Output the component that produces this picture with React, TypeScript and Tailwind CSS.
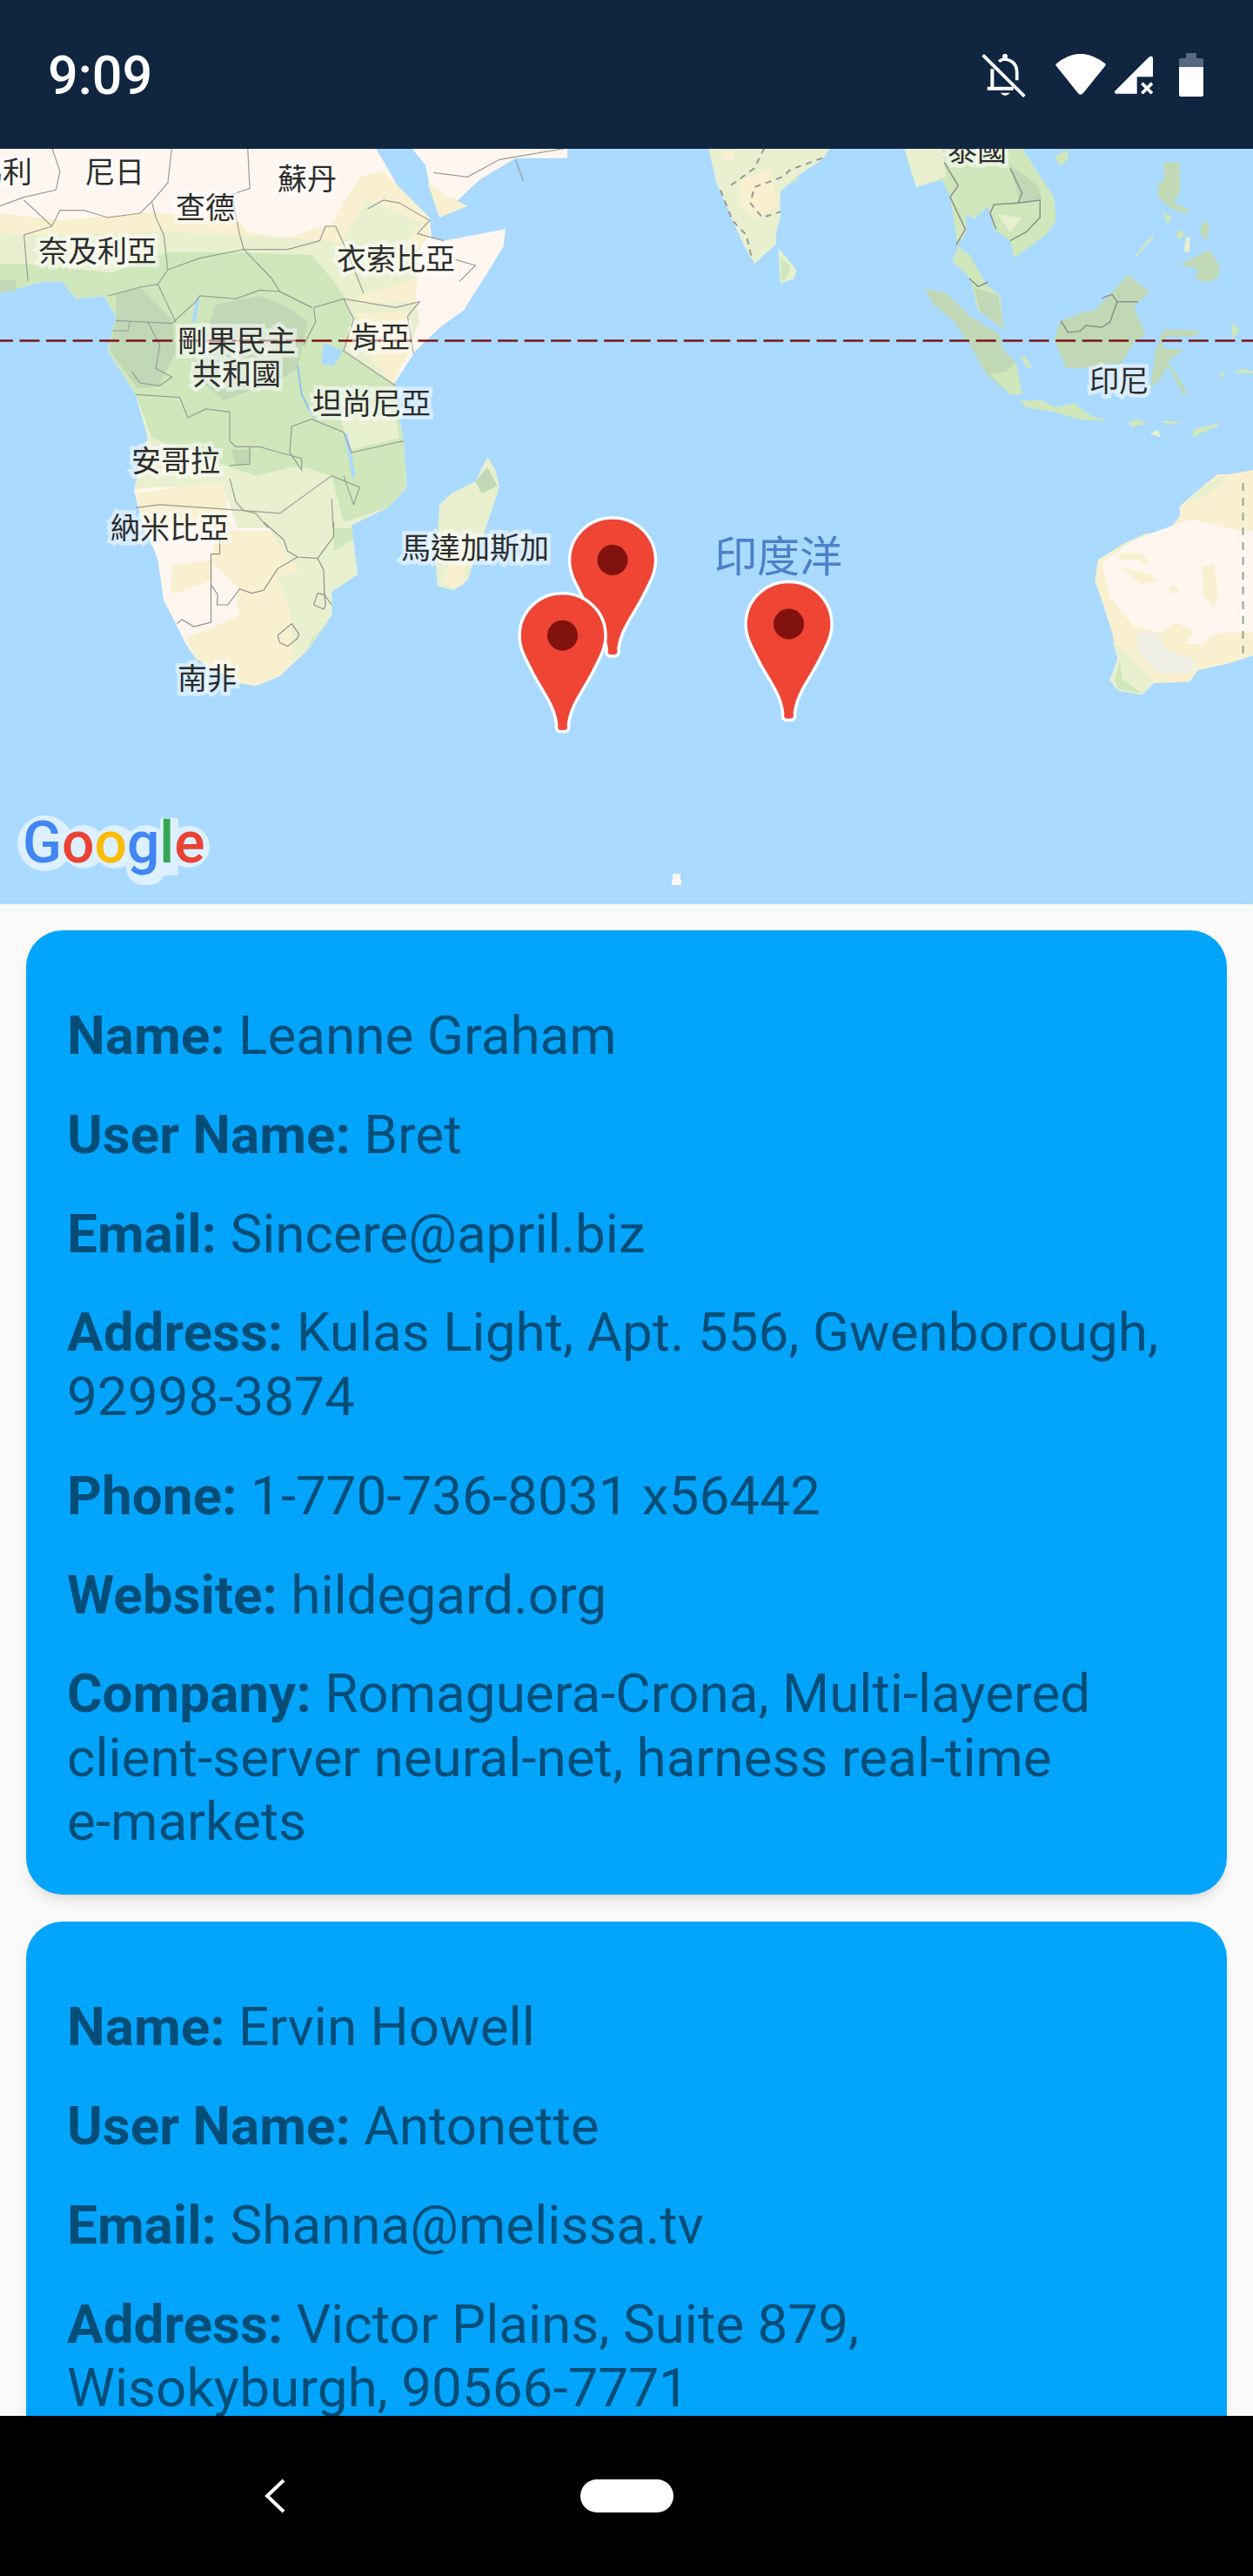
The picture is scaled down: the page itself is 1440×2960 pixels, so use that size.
import type { ReactNode } from "react";

const land = {
  desert: "#fff6ef",
  tan: "#f8f0cf",
  light: "#e8f0d0",
  green: "#cfe7bb",
  dark: "#c0d8b5",
};

const borders2 = [
  "130,0 150,80 140,145 60,170 0,200",
  "430,0 420,120 380,185 390,240 410,300 420,420 395,470 440,600",
  "620,0 625,140 580,160 600,300 610,350 500,380 420,420",
  "380,185 350,225 270,240 210,215 150,215 130,270 60,180",
  "130,270 60,300 70,460",
  "610,350 680,450 700,495 780,550",
  "610,350 680,350 720,350 800,320 815,270 840,270 860,330 910,500",
  "920,210 960,180 1000,190 1075,250 1045,295 1110,320",
  "1140,385 1190,405 1150,460",
  "860,520 990,550 1050,530 1020,580 1035,710",
  "860,520 785,550 790,600 760,680",
  "860,520 885,590 860,700 990,820",
  "290,595 430,605 490,530 500,510 590,520 650,490 700,495 780,550",
  "395,470 350,480 270,510",
  "280,630 320,630 325,600",
  "370,600 400,680 390,760 430,790 400,820 350,810 330,770",
  "340,850 450,860 470,930 515,900 575,910 575,1010 590,1030 650,1030 700,1050 755,1070 755,1110 725,1050 730,960 780,935 860,980 880,1050 1010,1010",
  "575,1140 590,1220 610,1250 700,1260 770,1190 830,1130 900,1170 885,1230 860,1130",
  "340,1240 400,1230 610,1250 640,1260 690,1340",
  "830,1210 835,1340",
  "625,1030 625,1090 575,1095",
];

const borders4 = [
  "660,0 710,60 720,100 745,120 795,125 835,50 835,0",
  "745,120 695,160 660,235 630,245 600,230 570,285 543,285 545,250 528,215 528,345 485,360 455,335 443,350",
  "528,215 528,110 550,110 550,60",
  "795,125 810,165 812,250 830,285",
  "785,285 795,245 812,250 815,285 810,300 785,285",
  "695,390 730,350 748,385 745,400 720,428 700,415 695,390",
];

function Pin({ x, y }: { x: number; y: number }) {
  return (
    <g transform={`translate(${x} ${y})`}>
      <path
        d="M0 0C-28 0-49.5 22-49.5 49C-49.5 64-42 76-35 90C-24 112-10 127-7 150L-7 155Q-7 159 0 159Q7 159 7 155L7 150C10 127 24 112 35 90C42 76 49.5 64 49.5 49C49.5 22 28 0 0 0Z"
        fill="#ee4535"
        stroke="#fff"
        strokeWidth="3.5"
      />
      <circle cx="0" cy="48.5" r="17.5" fill="#81120e" />
    </g>
  );
}

function MapDrawing() {
  return (
    <svg viewBox="0 171 1440 868" className="absolute inset-0 w-full h-full">
      <rect x="0" y="171" width="1440" height="868" fill="#aadaff" />

      {/* africa, coords taken from the upper left crop */}
      <g transform="translate(0 170) scale(0.4592 0.3333)">
        <polygon fill={land.desert} points="0,0 940,0 970,70 1010,170 1075,240 1080,310 1110,320 1265,280 1260,340 1220,430 1160,560 1100,620 1040,700 985,815 995,900 1010,1010 1018,1170 970,1240 880,1300 880,1335 365,1335 335,1180 370,1000 340,850 270,700 290,580 260,510 190,520 155,460 110,460 0,500" />
        <polygon fill={land.tan} points="0,225 150,250 380,220 440,230 590,240 620,290 720,310 830,260 900,100 960,80 1075,240 1075,300 1050,350 1040,520 1050,600 985,815 860,720 800,600 600,400 0,400" />
        <polygon fill={land.light} points="0,290 60,300 420,290 590,300 820,320 850,330 920,180 1060,260 1040,450 900,510 850,650 990,820 1000,1000 1018,1170 970,1240 880,1300 880,1335 600,1335 560,1170 380,1170 335,1180 370,1000 340,850 270,700 290,580 260,510 190,520 155,460 110,460 0,500" />
        <polygon fill={land.tan} points="1045,270 1075,300 1040,350 1010,340" />
        <polygon fill={land.tan} points="340,1190 560,1150 580,1330 365,1335" />
        <polygon fill={land.green} points="0,400 60,400 280,430 420,360 600,360 780,370 830,450 860,510 880,590 860,700 985,815 995,900 1010,1010 1018,1170 970,1240 860,1290 830,1130 760,1100 730,1100 640,1130 575,1100 380,1000 340,850 270,700 290,580 260,510 190,520 155,460 110,460 0,500" />
        <polygon fill={land.dark} points="290,500 350,480 430,590 440,700 400,820 345,830 275,700 290,580" />
        <polygon fill={land.dark} points="540,540 650,510 720,550 770,600 745,760 700,800 560,870 480,780" />
        <polygon fill={land.dark} points="0,455 40,455 40,490 0,500" />
        <polygon fill={land.light} points="880,540 1040,530 1050,600 985,790 920,760 880,680" />
        <polygon fill={land.tan} points="890,570 1020,560 1030,690 985,800 930,730" />
        <polygon fill={land.light} points="850,930 990,920 1000,1000 880,1040" />
        <polygon fill={land.dark} points="580,1040 625,1040 625,1095 590,1095" />
        <polygon fill="#aadaff" points="810,672 858,700 835,752 805,745" />
        <polyline fill="none" stroke="#aadaff" strokeWidth="4" points="495,520 485,600" vectorEffect="non-scaling-stroke" />
        <polyline fill="none" stroke="#8cc4ec" strokeWidth="2" points="745,750 755,850 785,930" vectorEffect="non-scaling-stroke" />
        <polyline fill="none" stroke="#aadaff" strokeWidth="4" points="865,985 875,1050 885,1135" vectorEffect="non-scaling-stroke" />
        {/* madagascar */}
        <polygon fill={land.light} points="1220,1065 1240,1110 1250,1170 1210,1335 1095,1335 1100,1230 1130,1190 1190,1150" />
        <polygon fill={land.dark} points="1220,1100 1245,1165 1205,1190 1190,1150" />
        {borders2.map((p) => (
          <polyline key={p} points={p} fill="none" stroke="#9b9c98" strokeWidth="1.2" vectorEffect="non-scaling-stroke" />
        ))}
        {/* arabia */}
        <polygon fill={land.desert} points="1030,0 1420,0 1420,35 1290,35 1200,110 1100,240 1075,130 1065,60" />
        <polygon fill={land.tan} points="1070,120 1100,240 1170,200 1110,160" />
        <polyline points="1085,85 1170,100 1250,40 1420,0" fill="none" stroke="#9b9c98" strokeWidth="1.2" vectorEffect="non-scaling-stroke" />
        <polyline points="1290,40 1310,115" fill="none" stroke="#9b9c98" strokeWidth="1.2" vectorEffect="non-scaling-stroke" />
      </g>

      {/* south africa, coords from the lower left crop */}
      <g transform="translate(0 600) scale(0.4592 0.3333)">
        <polygon fill={land.desert} points="365,20 395,130 410,270 440,350 465,420 490,470 600,555 640,565 700,530 770,440 830,320 830,240 895,180 880,20" />
        <polygon fill={land.tan} points="430,150 530,130 540,30 700,30 790,230 830,320 770,440 700,530 640,565 600,555 490,470 465,400 520,370 600,320 590,260 530,200 430,250" />
        <polygon fill={land.desert} points="530,140 600,230 580,320 540,340" />
        <polygon fill={land.light} points="670,20 880,20 895,180 830,240 830,320 770,440 730,480 730,330 710,240 690,190 750,170" />
        <polygon fill={land.green} points="835,20 880,20 885,60 835,100" />
        <polygon fill={land.green} points="825,345 780,400 770,440 790,395" />
        <polygon fill={land.light} points="1100,0 1220,0 1170,200 1135,235 1095,220 1090,130" />
        <polygon fill={land.tan} points="1125,140 1165,130 1160,215 1135,230 1110,210" />
        {borders4.map((p) => (
          <polyline key={p} points={p} fill="none" stroke="#8f918d" strokeWidth="1.2" vectorEffect="non-scaling-stroke" />
        ))}
      </g>

      {/* india and south east asia, upper right crop */}
      <g transform="translate(720 170) scale(0.4592 0.3333)">
        <polygon fill={land.light} points="205,0 510,0 490,40 435,90 385,150 385,240 375,290 375,330 320,400 295,340 265,250 225,120" />
        <polygon fill={land.tan} points="285,110 360,70 380,200 320,245 285,200" />
        <polygon fill={land.tan} points="235,10 270,10 270,40 245,40" />
        <polygon fill={land.green} points="400,130 435,95 425,115" />
        <polyline points="345,0 320,70 280,110 260,130" fill="none" stroke="#999" strokeWidth="2" strokeDasharray="7 6" vectorEffect="non-scaling-stroke" />
        <polyline points="490,35 410,75 390,100 320,135 310,190 340,240 385,220" fill="none" stroke="#999" strokeWidth="2" strokeDasharray="7 6" vectorEffect="non-scaling-stroke" />
        <polyline points="235,145 265,250 300,300 315,390" fill="none" stroke="#999" strokeWidth="2" strokeDasharray="7 6" vectorEffect="non-scaling-stroke" />
        <polygon fill={land.light} points="380,345 425,420 420,450 385,468" />
        <polygon fill={land.green} points="385,375 410,410 400,450 388,460" />

        <polygon fill={land.green} points="695,0 990,0 1070,170 1075,250 1050,300 1010,340 970,380 960,320 920,280 905,200 870,245 850,230 850,290 830,340 860,370 900,470 935,510 945,625 880,560 860,450 815,390 830,340 810,170 790,110 725,135" />
        <polygon fill={land.light} points="695,0 790,0 800,100 725,135" />
        <polygon fill={land.dark} points="960,60 1030,130 1040,180 985,190" />
        <polygon fill={land.light} points="930,230 990,240 960,290" />
        <polygon fill={land.dark} points="870,480 930,510 945,625 885,565" />
        <polyline points="795,50 830,130 810,170 848,280 825,335" fill="none" stroke="#8f8f8f" strokeWidth="1.5" vectorEffect="non-scaling-stroke" />
        <polyline points="960,70 990,155 980,190 1035,180 1035,240 1000,290 960,320" fill="none" stroke="#8f8f8f" strokeWidth="1.5" vectorEffect="non-scaling-stroke" />
        <polyline points="980,190 920,195 910,225 925,280" fill="none" stroke="#8f8f8f" strokeWidth="1.5" vectorEffect="non-scaling-stroke" />
        <polyline points="858,450 880,478 905,462" fill="none" stroke="#8f8f8f" strokeWidth="1.5" vectorEffect="non-scaling-stroke" />
        <polygon fill={land.green} points="1070,30 1105,5 1105,40 1085,60" />

        <polygon fill={land.dark} points="745,485 800,500 860,580 930,640 945,700 975,740 990,850 960,850 900,780 860,680 820,600 770,540" />
        <polygon fill={land.green} points="910,780 950,770 975,740 990,850 960,850" />
        <polygon fill={land.green} points="985,715 1000,720 1015,760 1000,755" />
        <polygon fill={land.green} points="985,870 1040,870 1075,895 1120,880 1165,925 1210,942 1130,935 1070,910 1000,895" />

        <polygon fill={land.dark} points="1255,437 1310,495 1285,525 1270,550 1300,640 1270,670 1240,740 1140,760 1100,760 1070,660 1085,595 1120,580 1130,570 1170,560 1210,505" />
        <polyline points="1190,518 1215,505 1228,530 1280,530" fill="none" stroke="#8f8f8f" strokeWidth="1.5" vectorEffect="non-scaling-stroke" />
        <polyline points="1228,530 1210,600 1190,618 1150,612 1135,632 1105,636 1087,596" fill="none" stroke="#8f8f8f" strokeWidth="1.5" vectorEffect="non-scaling-stroke" />

        <polygon fill={land.dark} points="1345,625 1440,630 1420,650 1350,650 1340,690 1395,695 1355,735 1405,845 1390,845 1355,750 1340,790 1310,830 1325,700" />
        <polygon fill={land.dark} points="1345,50 1385,50 1385,150 1370,190 1415,215 1395,225 1360,205 1330,170 1330,125 1345,110" />
        <polygon fill={land.dark} points="1460,350 1485,410 1480,450 1450,465 1425,450 1430,415 1385,405 1410,385" />
        <polygon fill={land.dark} points="1445,250 1460,265 1450,325 1435,285" />
        <polygon fill={land.green} points="1340,220 1365,240 1355,262" />
        <polygon fill={land.green} points="1380,282 1400,298 1378,318" />
        <polygon fill={land.light} points="1400,308 1410,308 1410,358 1395,358" />
        <polygon fill={land.green} points="1317,300 1320,310 1275,375 1272,370" />
        <polygon fill={land.green} points="1515,600 1535,630 1515,660" />
        <polygon fill={land.green} points="1490,770 1498,785 1482,790" />
        <polygon fill={land.green} points="1520,775 1540,760 1568,770 1568,778" />
        <polygon fill={land.green} points="1255,945 1280,935 1303,950 1265,962" />
        <polygon fill={land.green} points="1335,942 1392,942 1360,955" />
        <polygon fill={land.light} points="1310,985 1330,972 1338,998" />
        <polygon fill={land.green} points="1420,970 1483,948 1480,960 1442,980 1415,1000" />
      </g>

      {/* australia, from the right crop */}
      <g transform="translate(720 540) scale(0.4592 0.3333)">
        <polygon fill={land.tan} points="1568,0 1510,15 1480,15 1430,70 1385,125 1385,160 1355,210 1300,220 1250,250 1180,310 1172,380 1190,450 1215,560 1230,650 1210,725 1230,760 1290,775 1320,735 1410,730 1430,690 1500,670 1568,640" />
        <polygon fill={land.desert} points="1415,170 1540,210 1568,210 1568,560 1500,560 1470,570 1440,600 1400,600 1340,560 1270,540 1210,440 1190,320 1260,250 1310,220 1370,190" />
        <polygon fill={land.tan} points="1225,290 1290,285 1310,330 1280,310 1240,310" />
        <polygon fill={land.tan} points="1230,335 1310,360 1330,380 1290,395 1260,360" />
        <polygon fill={land.tan} points="1440,335 1470,325 1480,430 1470,480 1445,430" />
        <polygon fill={land.tan} points="1358,405 1372,395 1382,420 1370,428" />
        <polygon fill={land.tan} points="1375,525 1420,555 1400,600 1340,560" />
        <polygon fill="#f0f0e6" points="1280,560 1330,560 1350,620 1420,650 1420,700 1330,700 1280,620" />
        <polygon fill={land.light} points="1215,590 1260,640 1320,730 1290,775 1230,760 1210,725 1230,650" />
        <polygon fill={land.green} points="1235,650 1240,720 1290,770 1230,755 1222,725" />
        <polygon fill={land.light} points="1430,70 1490,20 1510,15 1450,90 1400,120" />
        <line x1="1543" y1="45" x2="1543" y2="650" stroke="#8da695" strokeWidth="2" strokeDasharray="9 8" vectorEffect="non-scaling-stroke" />
      </g>

      <line x1="-8" y1="391.5" x2="1440" y2="391.5" stroke="#7c1418" strokeWidth="2.5" strokeDasharray="23 7.53" />

      {/* pale halo behind the google letters */}
      <g fill="#ddf0ff">
        <circle cx="52" cy="969" r="32" />
        <circle cx="96" cy="973" r="25" />
        <circle cx="132" cy="973" r="25" />
        <circle cx="168" cy="973" r="25" />
        <rect x="145" y="975" width="46" height="42" rx="20" />
        <rect x="184" y="940" width="21" height="66" rx="3" />
        <circle cx="217" cy="973" r="24" />
      </g>

      <path d="M773 1004H782V1011H783V1017H772V1011H773Z" fill="#f7f7f5" />

      <Pin x={704} y={595} />
      <Pin x={646.5} y={681.7} />
      <Pin x={906.5} y={668.5} />
    </svg>
  );
}

function Label({ className, children }: { className: string; children: string }) {
  return (
    <span
      className={`absolute text-[34px] leading-[38px] whitespace-nowrap text-[#2c2c2c] [font-family:'Noto_Sans_CJK_TC','Noto_Sans',sans-serif] [-webkit-text-stroke:9px_rgba(255,255,255,0.55)] [paint-order:stroke_fill] ${className}`}
    >
      {children}
    </span>
  );
}

function MapPanel() {
  return (
    <div className="relative h-[868px] overflow-hidden shrink-0">
      <MapDrawing />
      <Label className="left-[-31px] top-[6px]">馬利</Label>
      <Label className="left-[98px] top-[6px]">尼日</Label>
      <Label className="left-[319px] top-[14px]">蘇丹</Label>
      <Label className="left-[202px] top-[47px]">查德</Label>
      <Label className="left-[44px] top-[97px]">奈及利亞</Label>
      <Label className="left-[387px] top-[106px]">衣索比亞</Label>
      <Label className="left-[204px] top-[200px]">剛果民主</Label>
      <Label className="left-[221px] top-[238px]">共和國</Label>
      <Label className="left-[403px] top-[196px]">肯亞</Label>
      <Label className="left-[359px] top-[272px]">坦尚尼亞</Label>
      <Label className="left-[151px] top-[338px]">安哥拉</Label>
      <Label className="left-[127px] top-[415px]">納米比亞</Label>
      <Label className="left-[461px] top-[438px]">馬達加斯加</Label>
      <Label className="left-[204px] top-[588px]">南非</Label>
      <Label className="left-[1089px] top-[-19px]">泰國</Label>
      <Label className="left-[1252px] top-[246px]">印尼</Label>
      <span className="absolute left-[821px] top-[438px] text-[49px] leading-[54px] whitespace-nowrap text-[#4c80c8] [font-family:'Noto_Sans_CJK_TC','Noto_Sans',sans-serif]">
        印度洋
      </span>
      <span className="absolute left-[26px] top-[759px] text-[66px] leading-[78px] font-medium whitespace-nowrap [font-family:Roboto,sans-serif]">
        <span className="text-[#4285f4]">G</span>
        <span className="text-[#ea4335]">o</span>
        <span className="text-[#fbbc05]">o</span>
        <span className="text-[#4285f4]">g</span>
        <span className="text-[#34a853]">l</span>
        <span className="text-[#ea4335]">e</span>
      </span>
    </div>
  );
}

function Field({ label, children }: { label: string; children: ReactNode }) {
  return (
    <p className="mb-[40.2px]">
      <span className="font-bold">{label}:</span> {children}
    </p>
  );
}

function StatusIcons() {
  return (
    <div className="flex items-center">
      <svg width="51" height="52" viewBox="85 60 153 156" fill="none" stroke="#fff">
        <path d="M90 70L233 212" strokeWidth="11" />
        <path d="M145 92Q155 84 165 84Q208 90 207 132V157" strokeWidth="11" />
        <path d="M122 118V180M105 185H195" strokeWidth="12" />
        <circle cx="166" cy="74" r="9" fill="#fff" stroke="none" />
        <path d="M150 200Q166 218 184 200Z" fill="#fff" stroke="none" />
      </svg>
      <svg width="58" height="47" viewBox="340 60 173 140" className="ml-[34px]">
        <path d="M346 97Q425 32 507 97L431 191Q426 197 421 191Z" fill="#fff" stroke="#fff" strokeWidth="10" strokeLinejoin="round" />
      </svg>
      <svg width="44" height="44" viewBox="543 72 132 132" className="ml-[10px]">
        <path d="M543 195L660 78Q675 66 675 85V145H620V203H552Q538 203 543 195Z" fill="#fff" />
        <path d="M637 167L672 202M672 167L637 202" stroke="#fff" strokeWidth="11" />
      </svg>
      <div className="ml-[30px] w-[28px] h-[50px] flex flex-col items-center">
        <div className="w-[12px] h-[6px] bg-[#56697f]" />
        <div className="w-[28px] h-[10px] bg-[#56697f] rounded-t-[2px]" />
        <div className="w-[28px] flex-1 bg-white rounded-b-[2px]" />
      </div>
    </div>
  );
}

export default function App() {
  return (
    <div className="h-[2960px] w-[1440px] flex flex-col overflow-hidden bg-[#fafafa] [font-family:Roboto,sans-serif]">
      <header className="h-[171px] shrink-0 bg-[#102540] flex items-center justify-between pl-[55px] pr-[57px] text-white">
        <span className="text-[61px] font-medium leading-none pt-[4px]">9:09</span>
        <StatusIcons />
      </header>

      <MapPanel />

      <main className="flex-1 min-h-0 overflow-hidden px-[30px] pt-[30px] flex flex-col gap-[31px]">
        <section className="shrink-0 bg-[#03a5fc] rounded-[42px] shadow-lg pl-[47px] pr-[47px] pt-[84px] pb-[7px] text-[62px] leading-[73.6px] text-[#024e78]">
          <Field label="Name">Leanne Graham</Field>
          <Field label="User Name">Bret</Field>
          <Field label="Email">Sincere@april.biz</Field>
          <Field label="Address">Kulas Light, Apt. 556, Gwenborough, 92998-3874</Field>
          <Field label="Phone">1-770-736-8031 x56442</Field>
          <Field label="Website">hildegard.org</Field>
          <Field label="Company">
            Romaguera-Crona, Multi-layered client-server neural-net, harness real-time{" "}
            <span className="whitespace-nowrap">e-markets</span>
          </Field>
        </section>
        <section className="shrink-0 bg-[#03a5fc] rounded-[42px] shadow-lg pl-[47px] pr-[47px] pt-[84px] pb-[7px] text-[62px] leading-[73.6px] text-[#024e78]">
          <Field label="Name">Ervin Howell</Field>
          <Field label="User Name">Antonette</Field>
          <Field label="Email">Shanna@melissa.tv</Field>
          <Field label="Address">Victor Plains, Suite 879, Wisokyburgh, 90566-7771</Field>
        </section>
      </main>

      <footer className="h-[184px] shrink-0 bg-black relative flex items-center justify-center">
        <svg width="30" height="40" viewBox="0 0 30 40" className="absolute left-[300px] top-[72px]" fill="none" stroke="#fff" strokeWidth="4">
          <path d="M26 2L7 20L26 38" />
        </svg>
        <div className="w-[107px] h-[38px] rounded-[19px] bg-white" />
      </footer>
    </div>
  );
}
